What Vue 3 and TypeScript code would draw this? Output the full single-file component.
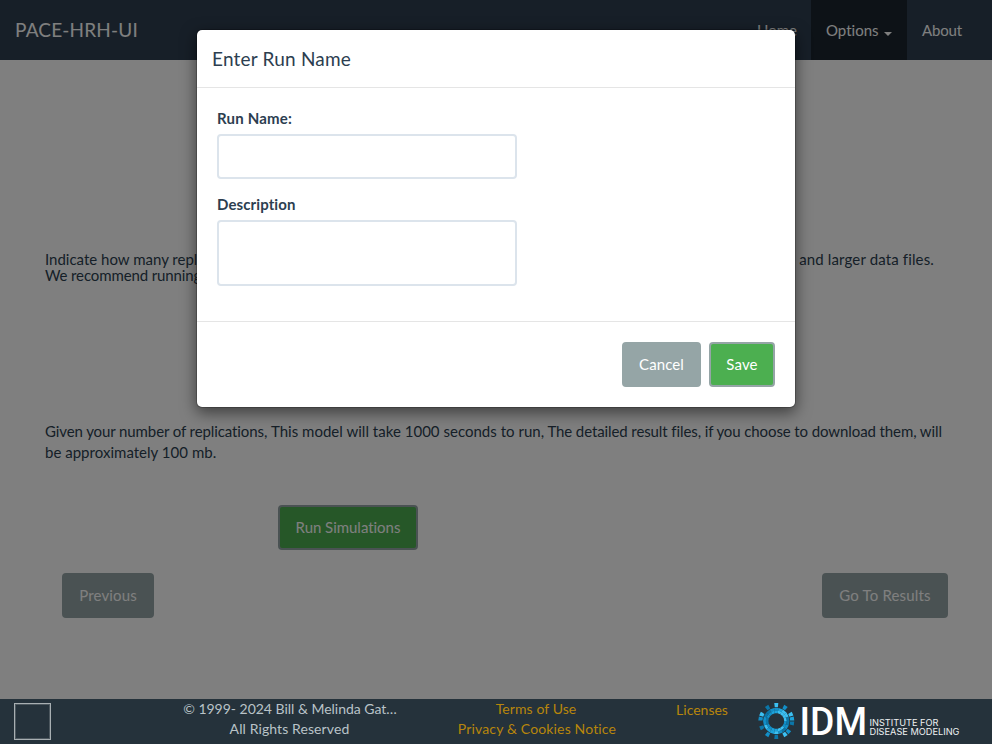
<script setup lang="ts">
interface Cell { d: string; color: string }

const palette = ['#128fc8', '#3cc0f2', '#0b76a8', '#1ca4dc']

function ring(inner: number, outer: number, colors: string, gap: number): Cell[] {
  const cells: Cell[] = []
  const step = (Math.PI * 2) / colors.length
  const point = (r: number, t: number) => `${(r * Math.cos(t)).toFixed(2)} ${(r * Math.sin(t)).toFixed(2)}`
  colors.split('').forEach((key, i) => {
    if (key === '-') return
    const a = i * step + gap
    const b = (i + 1) * step - gap
    cells.push({
      d: `M${point(inner, a)}L${point(outer, a)}L${point(outer, b)}L${point(inner, b)}Z`,
      color: palette[Number(key)],
    })
  })
  return cells
}

// Each digit picks a palette colour, clockwise from the right; a dash leaves a gap.
const gear: Cell[] = [
  ...ring(7.9, 10.6, '001133002200331111', 0),
  ...ring(10.5, 13.2, '202013310022003112', 0),
  ...ring(13.8, 18, '2-01-2-0-2-01-2-1-0-13', 0.03),
]
</script>

<template>
  <div class="page">
    <nav class="navbar">
      <span class="brand">PACE-HRH-UI</span>
      <ul class="nav">
        <li class="home">Home</li>
        <li class="active">Options <b class="caret"></b></li>
        <li class="about">About</li>
      </ul>
    </nav>

    <main class="content">
      <p class="intro">
        <span>Indicate how many replications you would like to run. More replications mean a longer</span>
        <span class="end">time and larger data files.</span>
      </p>
      <p class="intro second">We recommend running 100 replications.</p>
      <p class="estimate">
        Given your number of replications, <span class="wide">This model will take 1000 seconds to run,</span> The detailed result files, if you
        choose to download them, will <span class="wide">be approximately 100 mb.</span>
      </p>
      <div class="run-row"><button class="btn green run">Run Simulations</button></div>
      <div class="steps">
        <button class="btn previous">Previous</button>
        <button class="btn results">Go To Results</button>
      </div>
    </main>

    <footer class="footer">
      <div class="box"></div>
      <div class="copy">
        <div class="owner">© 1999- 2024 Bill &amp; Melinda Gat…</div>
        <div>All Rights Reserved</div>
      </div>
      <div class="links">
        <a class="terms">Terms of Use</a>
        <a>Privacy &amp; Cookies Notice</a>
      </div>
      <a class="licenses">Licenses</a>
      <svg class="logo" width="204" height="40" viewBox="0 0 204 40">
        <g transform="translate(19.3 20)">
          <path v-for="(c, i) in gear" :key="i" :d="c.d" :fill="c.color" />
        </g>
        <text class="idm" x="42.5" y="34" textLength="67.5" lengthAdjust="spacingAndGlyphs">IDM</text>
        <text class="small" x="112.5" y="25" textLength="69" lengthAdjust="spacingAndGlyphs">INSTITUTE FOR</text>
        <text class="small" x="112.5" y="34" textLength="90" lengthAdjust="spacingAndGlyphs">DISEASE MODELING</text>
      </svg>
    </footer>

    <div class="backdrop">
      <section class="modal" role="dialog">
        <header class="modal-head">Enter Run Name</header>
        <div class="modal-body">
          <label class="name-label" for="run-name">Run Name:</label>
          <input id="run-name" type="text" />
          <label for="run-desc">Description</label>
          <textarea id="run-desc"></textarea>
        </div>
        <div class="modal-foot">
          <button class="btn cancel">Cancel</button>
          <button class="btn green save">Save</button>
        </div>
      </section>
    </div>
  </div>
</template>

<style>
body { margin: 0; background: #fff; overflow: hidden; }
</style>

<style scoped>
* { box-sizing: border-box; }
.page {
  position: relative;
  display: flex;
  flex-direction: column;
  height: 744px;
  font: 15px/21.43px Lato, sans-serif;
  font-variant-ligatures: none;
  color: #2c3e50;
}
.navbar {
  display: flex;
  justify-content: space-between;
  height: 60px;
  padding: 0 15px;
  background: #2e3f50;
  color: #fff;
}
.brand { font-size: 19px; line-height: 60px; letter-spacing: 0.18px; }
.nav { display: flex; margin: 0; padding: 0; list-style: none; }
.nav li { padding: 0 15px; line-height: 61px; white-space: nowrap; }
.nav .home { padding-right: 14px; }
.nav .active { width: 96px; padding-right: 0; background: #1a242f; }
.nav .about { width: 70px; padding-right: 0; letter-spacing: -0.15px; }
.caret {
  display: inline-block;
  margin: 4px 0 0 2px;
  vertical-align: middle;
  border: 4px solid transparent;
  border-top-color: #fff;
  border-bottom: 0;
}
.content { flex: 1; padding: 191px 45px 0; }
.intro { display: flex; justify-content: space-between; margin: 0; line-height: 16px; white-space: nowrap; }
.intro .end { padding-right: 13px; letter-spacing: 0.14px; }
.second { letter-spacing: -0.12px; }
.estimate { margin: 138px 0 0; letter-spacing: -0.1px; }
.wide { letter-spacing: 0.02px; }
.run-row { padding: 41px 0 0 233px; }
.steps { display: flex; justify-content: space-between; margin-right: -1px; padding: 23px 0 0 17px; }
.btn {
  height: 45px;
  padding: 0;
  border: 2px solid #95a5a6;
  border-radius: 4px;
  background: #95a5a6;
  color: #fff;
  font: 15px/21px Lato, sans-serif;
  font-variant-ligatures: none;
}
.btn.green { background: #4caf50; }
.run { width: 140px; letter-spacing: -0.03px; }
.previous { width: 92px; letter-spacing: 0.15px; }
.results { width: 126px; letter-spacing: 0.16px; }
.cancel { width: 79px; letter-spacing: 0.1px; }
.save { width: 66px; letter-spacing: 0.15px; }
.footer {
  position: relative;
  z-index: 3;
  display: flex;
  height: 45px;
  background: #25323b;
  color: #b9c3c8;
  font-size: 14px;
  line-height: 20px;
  text-align: center;
}
.box { width: 37px; height: 37px; margin: 4px 0 0 14px; border: 1px solid #a8afb2; box-shadow: inset 0 0 0 1px #4d585f; }
.copy { width: 215px; margin-left: 131px; letter-spacing: 0.1px; white-space: nowrap; }
.owner { padding-left: 1px; letter-spacing: -0.02px; }
.links { display: flex; flex-direction: column; width: 170px; margin-left: 55px; letter-spacing: 0.15px; }
.terms { padding-right: 2px; letter-spacing: 0.08px; }
.footer a { color: #b8860b; }
.licenses { width: 60px; margin: 1px 0 0 50px; }
.logo { margin: 2px 0 0 25px; overflow: visible; }
.idm { font: 500 38px Roboto, sans-serif; fill: #fff; }
.small { font: 400 9px Inter, sans-serif; fill: #eef1f2; }
.backdrop {
  position: absolute;
  inset: 0;
  z-index: 2;
  display: flex;
  justify-content: center;
  align-items: flex-start;
  padding-top: 29px;
  background: rgba(0, 0, 0, 0.5);
}
.modal {
  width: 600px;
  border: 1px solid rgba(0, 0, 0, 0.2);
  border-radius: 6px;
  background: #fff;
  background-clip: padding-box;
  box-shadow: 0 5px 15px rgba(0, 0, 0, 0.5);
}
.modal-head {
  height: 58px;
  padding: 15px 15px 0;
  border-bottom: 1px solid #e5e5e5;
  font-size: 19px;
  line-height: 27px;
  letter-spacing: 0.2px;
}
.modal-body { display: flex; flex-direction: column; height: 233px; padding: 20px; }
label { margin-bottom: 5px; font-weight: 700; line-height: 21px; letter-spacing: 0.1px; }
.name-label { letter-spacing: 0.2px; }
input, textarea {
  width: 300px;
  height: 45px;
  margin: 0 0 15px;
  border: 2px solid #dce4ec;
  border-radius: 4px;
  background: #fff;
  resize: none;
}
textarea { height: 66px; }
.modal-foot { display: flex; justify-content: flex-end; gap: 8px; height: 86px; padding: 20px; border-top: 1px solid #e5e5e5; }
</style>
